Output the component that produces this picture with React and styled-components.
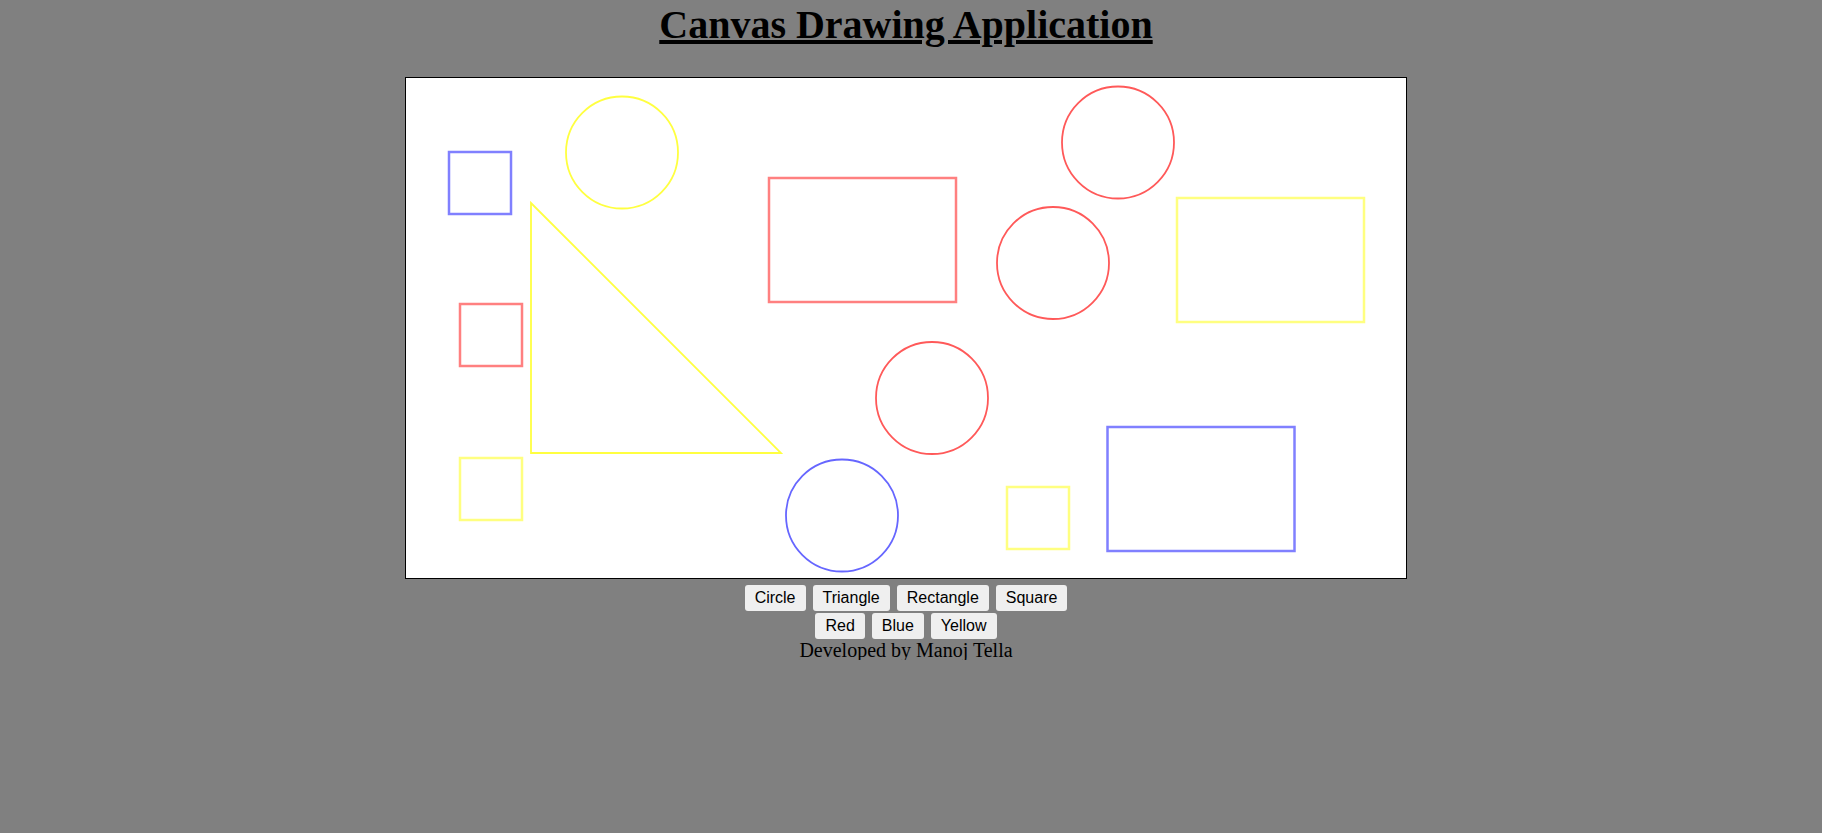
import React from 'react';
import styled, { createGlobalStyle } from 'styled-components';

const GlobalStyle = createGlobalStyle`
  body {
    margin: 0;
    background-color: #808080;
    font-family: 'Liberation Serif', 'Times New Roman', serif;
  }
`;

const Page = styled.div`
  display: flex;
  flex-direction: column;
  align-items: center;
  padding: 3px 10px 0 0;
`;

const Title = styled.h1`
  margin: 0 0 30px;
  font-size: 40px;
  line-height: 44px;
  font-weight: bold;
  text-decoration: underline;
  color: #000;
`;

const Board = styled.svg`
  display: block;
  width: 1000px;
  height: 500px;
  background-color: #fff;
  border: 1px solid #000;
`;

const ButtonRow = styled.div`
  display: flex;
  gap: 7px;
  margin-top: ${props => props.$top}px;
`;

const ToolButton = styled.button`
  font-family: 'Liberation Sans', Arial, sans-serif;
  font-size: 16px;
  line-height: 18px;
  padding: 4px 10px;
  border: none;
  border-radius: 3px;
  background-color: #efefef;
  color: #000;
  cursor: pointer;
`;

const Credit = styled.div`
  font-size: 20px;
  line-height: 20px;
  margin-top: 1px;
  color: #000;
`;

const colors = {
  rect: { red: '#ff8080', blue: '#8080ff', yellow: '#ffff80' },
  round: { red: 'rgba(255,0,0,0.65)', blue: 'rgba(0,0,255,0.6)', yellow: 'rgba(255,255,0,0.75)' },
};

const shapes = [
  { type: 'square', color: 'blue', x: 43, y: 74, w: 62, h: 62 },
  { type: 'square', color: 'red', x: 54, y: 226, w: 62, h: 62 },
  { type: 'square', color: 'yellow', x: 54, y: 380, w: 62, h: 62 },
  { type: 'square', color: 'yellow', x: 601, y: 409, w: 62, h: 62 },
  { type: 'rect', color: 'red', x: 363, y: 100, w: 187, h: 124 },
  { type: 'rect', color: 'yellow', x: 771, y: 120, w: 187, h: 124 },
  { type: 'rect', color: 'blue', x: 701.5, y: 349, w: 187, h: 124 },
  { type: 'circle', color: 'yellow', cx: 216, cy: 74.5 },
  { type: 'circle', color: 'red', cx: 712, cy: 64.5 },
  { type: 'circle', color: 'red', cx: 647, cy: 185 },
  { type: 'circle', color: 'red', cx: 526, cy: 320 },
  { type: 'circle', color: 'blue', cx: 436, cy: 437.5 },
  { type: 'triangle', color: 'yellow', points: '125,125 125,375 375,375' },
];

function Shape({ shape }) {
  if (shape.type === 'circle') {
    return <circle cx={shape.cx} cy={shape.cy} r="56" fill="none" stroke={colors.round[shape.color]} strokeWidth="1.8" />;
  }
  if (shape.type === 'triangle') {
    return <polygon points={shape.points} fill="none" stroke={colors.round[shape.color]} strokeWidth="1.8" />;
  }
  return <rect x={shape.x} y={shape.y} width={shape.w} height={shape.h} fill="none" stroke={colors.rect[shape.color]} strokeWidth="2.5" />;
}

export default function App() {
  return (
    <Page>
      <GlobalStyle />
      <Title>Canvas Drawing Application</Title>
      <Board viewBox="0 0 1000 500">
        {shapes.map((s, i) => <Shape key={i} shape={s} />)}
      </Board>
      <ButtonRow $top={6}>
        <ToolButton>Circle</ToolButton>
        <ToolButton>Triangle</ToolButton>
        <ToolButton>Rectangle</ToolButton>
        <ToolButton>Square</ToolButton>
      </ButtonRow>
      <ButtonRow $top={2}>
        <ToolButton>Red</ToolButton>
        <ToolButton>Blue</ToolButton>
        <ToolButton>Yellow</ToolButton>
      </ButtonRow>
      <Credit>Developed by Manoj Tella</Credit>
    </Page>
  );
}
